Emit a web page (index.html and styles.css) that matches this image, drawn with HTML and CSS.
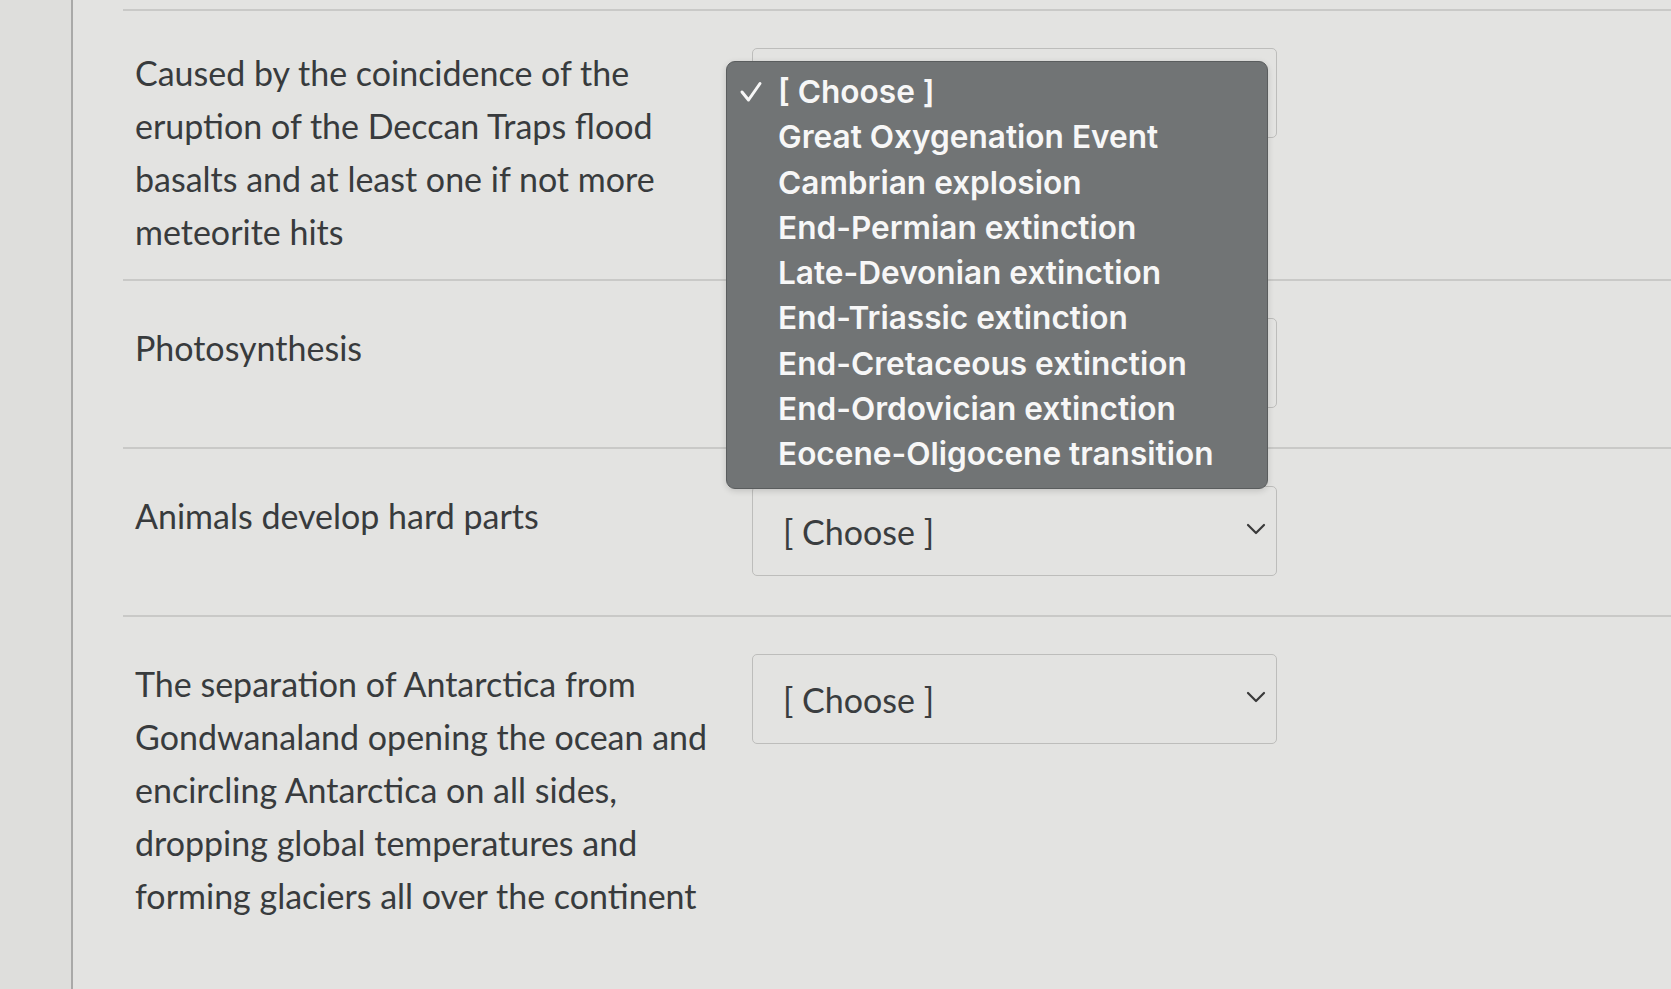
FILE: index.html
```html
<!DOCTYPE html>
<html lang="en">
<head>
<meta charset="utf-8">
<title>Matching question</title>
<link rel="stylesheet" href="styles.css">
</head>
<body>
<div class="page">
  <div class="gutter"></div>
  <div class="content">
    <div class="row row-first">
      <div class="prompt">Caused by the coincidence of the eruption of the Deccan Traps flood basalts and at least one if not more meteorite hits</div>
      <div class="answer">
        <div class="select"><span class="value">[ Choose ]</span><svg class="chev" viewBox="0 0 20 12" width="20" height="12"><path d="M2 2 L10 10 L18 2" fill="none" stroke="#3a3a3a" stroke-width="2.2" stroke-linecap="round" stroke-linejoin="round"/></svg></div>
        <ul class="menu">
          <li class="checked"><span class="tick"><svg viewBox="0 0 24 22" width="24" height="22"><path d="M3 11 L9.5 19 L21 2.5" fill="none" stroke="#f7f7f7" stroke-width="3" stroke-linecap="round" stroke-linejoin="round"/></svg></span>[ Choose ]</li>
          <li><span class="tick"></span>Great Oxygenation Event</li>
          <li><span class="tick"></span>Cambrian explosion</li>
          <li><span class="tick"></span>End-Permian extinction</li>
          <li><span class="tick"></span>Late-Devonian extinction</li>
          <li><span class="tick"></span>End-Triassic extinction</li>
          <li><span class="tick"></span>End-Cretaceous extinction</li>
          <li><span class="tick"></span>End-Ordovician extinction</li>
          <li><span class="tick"></span>Eocene-Oligocene transition</li>
        </ul>
      </div>
    </div>
    <div class="row">
      <div class="prompt">Photosynthesis</div>
      <div class="answer">
        <div class="select"><span class="value">[ Choose ]</span><svg class="chev" viewBox="0 0 20 12" width="20" height="12"><path d="M2 2 L10 10 L18 2" fill="none" stroke="#3a3a3a" stroke-width="2.2" stroke-linecap="round" stroke-linejoin="round"/></svg></div>
      </div>
    </div>
    <div class="row">
      <div class="prompt">Animals develop hard parts</div>
      <div class="answer">
        <div class="select"><span class="value">[ Choose ]</span><svg class="chev" viewBox="0 0 20 12" width="20" height="12"><path d="M2 2 L10 10 L18 2" fill="none" stroke="#3a3a3a" stroke-width="2.2" stroke-linecap="round" stroke-linejoin="round"/></svg></div>
      </div>
    </div>
    <div class="row row-last">
      <div class="prompt">The separation of Antarctica from Gondwanaland opening the ocean and encircling Antarctica on all sides, dropping global temperatures and forming glaciers all over the continent</div>
      <div class="answer">
        <div class="select"><span class="value">[ Choose ]</span><svg class="chev" viewBox="0 0 20 12" width="20" height="12"><path d="M2 2 L10 10 L18 2" fill="none" stroke="#3a3a3a" stroke-width="2.2" stroke-linecap="round" stroke-linejoin="round"/></svg></div>
      </div>
    </div>
  </div>
</div>
</body>
</html>
```
FILE: styles.css
```css
html, body {
  margin: 0;
  padding: 0;
  background: #e3e3e1;
}
body {
  font-family: "Lato", "Liberation Sans", sans-serif;
  color: #383b3d;
  overflow: hidden;
}
.page {
  display: flex;
  min-height: 989px;
}
.gutter {
  width: 71px;
  flex: none;
  background: #dededc;
  border-right: 2px solid #a9a9a8;
}
.content {
  flex: 1;
  margin-left: 50px;
  padding-top: 9px;
}
.row {
  display: flex;
  gap: 27px;
  padding: 37px 0 18px 12px;
  border-top: 2px solid #c9c9c7;
}
.row-first {
  padding-top: 35px;
  padding-bottom: 21px;
}
.prompt {
  width: 590px;
  flex: none;
  font-size: 34px;
  line-height: 53px;
  padding-top: 3px;
}
.row-first .prompt {
  padding-top: 0;
}
.answer {
  position: relative;
  width: 525px;
  padding-bottom: 21px;
}
.row-first .answer {
  z-index: 5;
  margin-top: 2px;
}
.select {
  border: 1px solid #bdbdbb;
  border-radius: 5px;
  display: flex;
  align-items: center;
  justify-content: space-between;
  padding: 0 10px 0 30px;
  box-sizing: border-box;
  height: 90px;
}
.value {
  font-size: 34px;
  color: #3a3d3f;
}
.chev {
  display: block;
  margin-top: -4px;
}
.menu {
  position: absolute;
  z-index: 10;
  left: -26px;
  top: 13px;
  width: 542px;
  height: 428px;
  box-sizing: border-box;
  margin: 0;
  padding: 7px 0 13px 12px;
  list-style: none;
  background: #717475;
  border: 1.5px solid #5a5d5e;
  border-radius: 9px;
  box-shadow: 0 2px 6px rgba(0,0,0,0.15);
  font-family: "Inter", "Roboto", sans-serif;
  font-weight: 600;
  font-size: 31.6px;
  line-height: 45.3px;
  color: #f7f7f7;
}
.menu li {
  display: flex;
  align-items: center;
  white-space: nowrap;
}
.tick {
  width: 39px;
  flex: none;
  display: flex;
  align-items: center;
}
.tick svg {
  display: block;
}
```
